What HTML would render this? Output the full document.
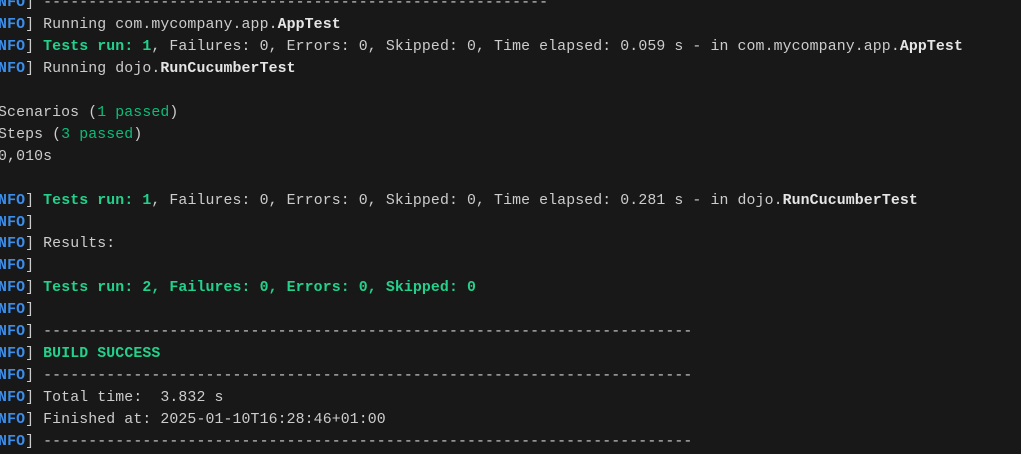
<!DOCTYPE html>
<html><head><meta charset="utf-8"><style>
html,body{margin:0;padding:0;background:#181818;width:1021px;height:436px;overflow:hidden}
pre{position:absolute;left:-20px;top:-7px;margin:0;font-family:"Liberation Mono",monospace;font-size:14.85px;letter-spacing:0.11px;line-height:21.95px;color:#cccccc;white-space:pre}
.i{color:#3b8eea;font-weight:bold}
.g{color:#23d18b;font-weight:bold}
.d{color:#0dbc79}
.w{color:#e5e5e5;font-weight:bold}
</style></head><body><pre>[<span class="i">INFO</span>] --------------------------------------------------------
[<span class="i">INFO</span>] Running com.mycompany.app.<span class="w">AppTest</span>
[<span class="i">INFO</span>] <span class="g">Tests run: 1</span>, Failures: 0, Errors: 0, Skipped: 0, Time elapsed: 0.059 s - in com.mycompany.app.<span class="w">AppTest</span>
[<span class="i">INFO</span>] Running dojo.<span class="w">RunCucumberTest</span>

  Scenarios (<span class="d">1 passed</span>)
  Steps (<span class="d">3 passed</span>)
  0,010s

[<span class="i">INFO</span>] <span class="g">Tests run: 1</span>, Failures: 0, Errors: 0, Skipped: 0, Time elapsed: 0.281 s - in dojo.<span class="w">RunCucumberTest</span>
[<span class="i">INFO</span>]
[<span class="i">INFO</span>] Results:
[<span class="i">INFO</span>]
[<span class="i">INFO</span>] <span class="g">Tests run: 2, Failures: 0, Errors: 0, Skipped: 0</span>
[<span class="i">INFO</span>]
[<span class="i">INFO</span>] ------------------------------------------------------------------------
[<span class="i">INFO</span>] <span class="g">BUILD SUCCESS</span>
[<span class="i">INFO</span>] ------------------------------------------------------------------------
[<span class="i">INFO</span>] Total time:  3.832 s
[<span class="i">INFO</span>] Finished at: 2025-01-10T16:28:46+01:00
[<span class="i">INFO</span>] ------------------------------------------------------------------------
</pre></body></html>
